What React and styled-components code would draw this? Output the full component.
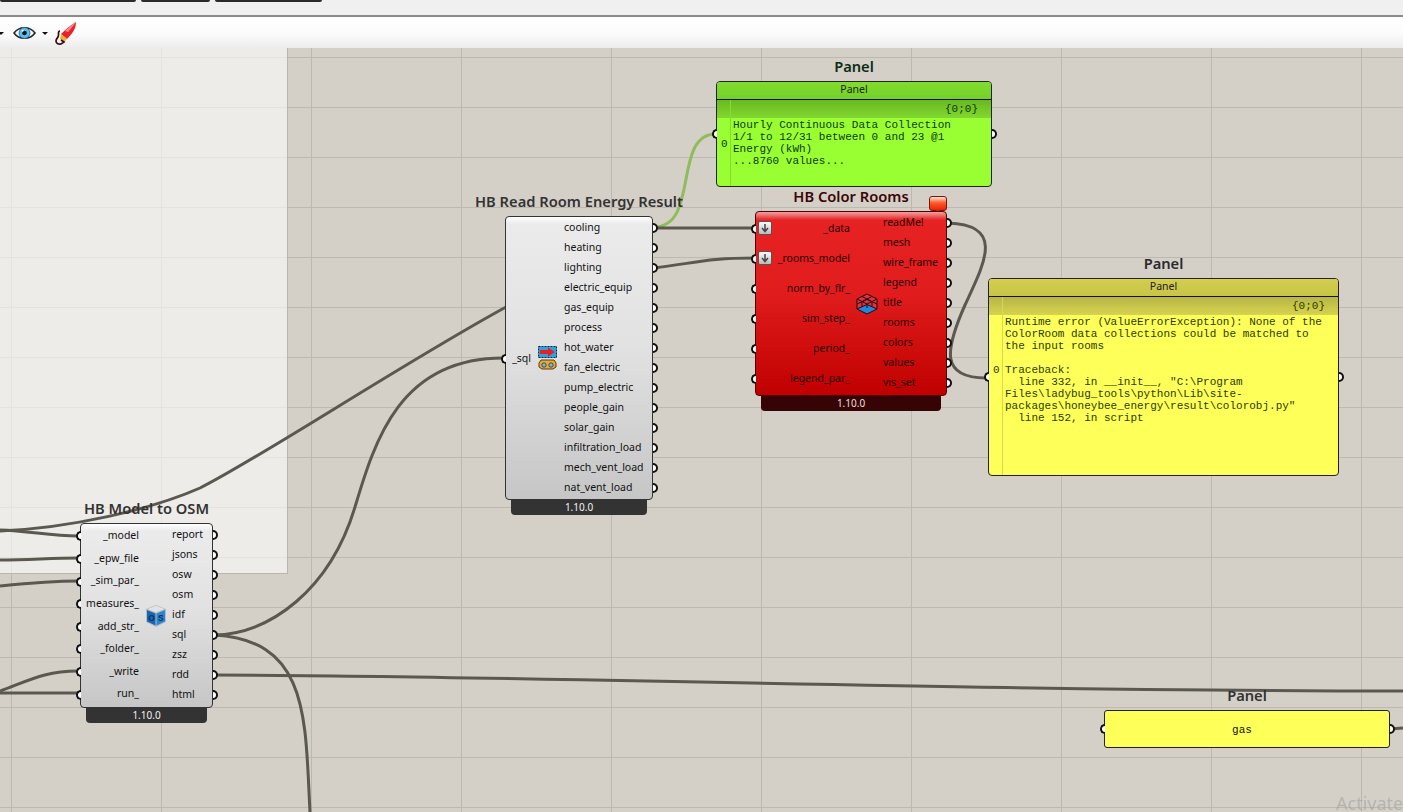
import React from "react";
import styled, { createGlobalStyle } from "styled-components";

const GlobalStyle = createGlobalStyle`
  html, body {
    margin: 0;
    padding: 0;
    height: 100%;
    overflow: hidden;
    background: #d4d0c8;
  }
  #root {
    height: 100%;
  }
`;

const Page = styled.div`
  width: 1403px;
  height: 812px;
  display: flex;
  flex-direction: column;
  overflow: hidden;
  font-family: "Noto Sans", "Open Sans", sans-serif;
`;

const TabStrip = styled.div`
  height: 15px;
  flex: none;
  display: flex;
  gap: 5px;
  align-items: flex-start;
  background: #f0f0f0;
  border-bottom: 2px solid #8a8a8a;
`;

const Tab = styled.div`
  width: ${(p) => p.$w}px;
  height: 2px;
  background: #2b2b2b;
  border-radius: 0 0 3px 3px;
`;

const Toolbar = styled.div`
  height: 31px;
  flex: none;
  display: flex;
  align-items: center;
  background: linear-gradient(#ffffff, #fbfbfb 55%, #ececec);
`;

const Caret = styled.span`
  width: 0;
  height: 0;
  margin-left: ${(p) => p.$ml}px;
  margin-top: 1px;
  border-left: 3px solid transparent;
  border-right: 3px solid transparent;
  border-top: 3px solid #111;
`;

const Canvas = styled.div`
  position: relative;
  flex: 1;
  overflow: hidden;
  background-color: #d4d0c8;
  background-image:
    linear-gradient(90deg, #bdb9b2 1px, transparent 1px),
    linear-gradient(#bdb9b2 1px, transparent 1px);
  background-size: 150px 50px;
  background-position: 11px 0, 0 9px;
`;

const Group = styled.div`
  position: absolute;
  left: 0;
  top: 0;
  width: 287px;
  height: 525px;
  background: rgba(255, 255, 255, 0.6);
  border-right: 1px solid #b9b6ae;
  border-bottom: 1px solid #b9b6ae;
`;

const Wires = styled.svg`
  position: absolute;
  left: 0;
  top: 0;
  width: 1403px;
  height: 764px;
`;

const NodeWrap = styled.div`
  position: absolute;
  left: ${(p) => p.$x}px;
  top: ${(p) => p.$y - 48}px;
  width: ${(p) => p.$w}px;
`;

const NodeLabel = styled.div`
  position: absolute;
  left: -60px;
  right: -60px;
  bottom: 100%;
  margin-bottom: 5px;
  text-align: center;
  font-size: 14.7px;
  line-height: 20px;
  font-weight: 600;
  white-space: nowrap;
  color: ${(p) => p.$color || "#333"};
`;

const NodeBody = styled.div`
  box-sizing: border-box;
  position: relative;
  display: grid;
  grid-template-columns: ${(p) => p.$inW}px ${(p) => p.$iconW}px 1fr;
  height: ${(p) => p.$h}px;
  border: 1px solid ${(p) => (p.$red ? "#4a0505" : "#333")};
  border-radius: 4px;
  color: ${(p) => (p.$red ? "#2a0000" : "#111")};
  background: ${(p) =>
    p.$red
      ? "linear-gradient(#f4a0a0, #e62222 8px, #e01c1c 45%, #c00000)"
      : "linear-gradient(#ffffff, #ebebeb 7px, #e2e2e2 45%, #c6c6c6)"};
  font-size: 10.5px;
`;

const Footer = styled.div`
  margin: 0 6px;
  height: 15px;
  line-height: 14px;
  text-align: center;
  font-size: 10px;
  border-radius: 0 0 4px 4px;
  color: ${(p) => (p.$red ? "#f2dede" : "#f2f2f2")};
  background: ${(p) => (p.$red ? "#360404" : "#333")};
`;

const InputCol = styled.div`
  display: flex;
  flex-direction: column;
  justify-content: center;
  align-items: stretch;
  padding-bottom: ${(p) => p.$pb}px;
`;

const OutputCol = styled.div`
  display: flex;
  flex-direction: column;
`;

const IconCell = styled.div`
  display: flex;
  align-items: center;
  justify-content: center;
`;

const Row = styled.div`
  position: relative;
  height: ${(p) => p.$h}px;
  line-height: ${(p) => p.$h}px;
  white-space: nowrap;
  text-align: ${(p) => (p.$right ? "right" : "left")};
`;

const Grip = styled.span`
  box-sizing: border-box;
  position: absolute;
  top: 50%;
  width: 5px;
  height: 10px;
  margin-top: ${(p) => p.$mt ?? -4}px;
  background: #fff;
  border: 2px solid #111;
  ${(p) =>
    p.$side === "left"
      ? "left: -5px; border-right: none; border-radius: 5px 0 0 5px;"
      : "right: -6px; border-left: none; border-radius: 0 5px 5px 0;"}
`;

const ArrowBadge = styled.span`
  box-sizing: border-box;
  position: absolute;
  left: 2px;
  top: 50%;
  width: 14px;
  height: 14px;
  margin-top: -7px;
  display: flex;
  align-items: center;
  justify-content: center;
  background: linear-gradient(#fafafa, #bbb);
  border: 1px solid #555;
  border-radius: 2px;
`;

const Balloon = styled.div`
  box-sizing: border-box;
  position: absolute;
  right: 0;
  top: -15px;
  width: 18px;
  height: 15px;
  background: linear-gradient(#ffe6d8, #ff5a2a 45%, #e82208);
  border: 1px solid #7a1508;
  border-radius: 3px;
  &::after {
    content: "";
    position: absolute;
    left: 5px;
    top: 12px;
    border-left: 3px solid transparent;
    border-right: 3px solid transparent;
    border-top: 3px solid #e82208;
  }
`;

const PanelBox = styled.div`
  box-sizing: border-box;
  position: relative;
  height: ${(p) => p.$h}px;
  display: flex;
  flex-direction: column;
  border: 1px solid #222;
  border-radius: 4px;
  color: ${(p) => p.$ink};
  background: ${(p) => p.$base};
`;

const PanelTitle = styled.div`
  flex: none;
  height: 17px;
  line-height: 15px;
  text-align: center;
  font-size: 10.5px;
  color: #222;
  border-bottom: 1px solid #111;
  border-radius: 3px 3px 0 0;
  background: ${(p) => p.$bar};
`;

const PanelInner = styled.div`
  flex: 1;
  display: grid;
  grid-template-columns: 14px 1fr;
  min-height: 0;
  border-radius: 0 0 3px 3px;
  background: linear-gradient(${(p) => p.$strip}) top / 100% 18px no-repeat;
`;

const Gutter = styled.div`
  border-right: 1px solid ${(p) => p.$line};
  padding-top: ${(p) => p.$zeroTop}px;
  padding-left: 4px;
  font-family: "Liberation Mono", monospace;
  font-size: 11px;
  line-height: 12px;
`;

const PanelContent = styled.div`
  font-family: "Liberation Mono", monospace;
  font-size: 11px;
  line-height: 12px;
  padding: 0 6px 0 2px;
  white-space: pre;
`;

const IndexTag = styled.div`
  height: 19px;
  line-height: 19px;
  text-align: right;
  padding-right: 7px;
`;

const GasBox = styled.div`
  box-sizing: border-box;
  position: relative;
  height: 38px;
  display: flex;
  align-items: center;
  justify-content: center;
  padding: 1px 10px 0 0;
  font-family: "Liberation Mono", monospace;
  font-size: 11px;
  color: #111;
  background: #ffff59;
  border: 1px solid #222;
  border-radius: 3px;
`;

const Watermark = styled.div`
  position: absolute;
  left: 1336px;
  top: 743px;
  font-family: "Noto Sans", sans-serif;
  font-size: 18px;
  line-height: 24px;
  white-space: nowrap;
  color: rgba(160, 160, 158, 0.6);
`;

const EyeIcon = () => (
  <svg width="23" height="18" viewBox="0 0 23 18" style={{ marginLeft: 9, flex: "none" }}>
    <path d="M1 9 C6 2 17 2 22 9 C17 16 6 16 1 9 Z" fill="#f2f6f8" stroke="#1f2a33" strokeWidth="1.6" />
    <circle cx="11.5" cy="9" r="5.4" fill="#5cc0ee" stroke="#2b5f85" strokeWidth="0.8" />
    <circle cx="11.5" cy="9" r="2.3" fill="#06121c" />
    <circle cx="9.6" cy="6.8" r="1" fill="#fff" />
  </svg>
);

const BrushIcon = () => (
  <svg width="23" height="24" viewBox="0 0 23 24" style={{ marginLeft: 6, flex: "none" }}>
    <path d="M22 1 C22 8 18 13 13 18 L7 13 C12 8 17 4 22 1 Z" fill="#e8222a" />
    <path d="M22 1 C20 4 17 8 14 11 L11 10 C14 7 18 4 22 1 Z" fill="#f58a8a" />
    <path d="M7 13 L13 18 L10 21 L6 18 Z" fill="#e9b13a" />
    <path d="M7 19 L10 21 L7 23 C4 23.500 2 22 2 20 C2 17 5 17 4.500 13 C4.300 11 5 10 6 10" fill="none" stroke="#3a0c0c" strokeWidth="1.7" />
  </svg>
);

const SqlIcon = () => (
  <svg width="19" height="24" viewBox="0 0 19 24">
    <rect x="0.500" y="0.500" width="18" height="11" fill="#22a8e0" stroke="#10213a" strokeDasharray="2 1" />
    <path d="M2 4 H10 V1.500 L17 6 L10 10.500 V8 H2 Z" fill="#ee1c25" />
    <path d="M3 14 H16 L18 17 V21 L15 23 H4 L1 21 V17 Z" fill="#f0a830" stroke="#5a3a10" />
    <circle cx="6" cy="19" r="2.200" fill="#5cc0ee" stroke="#222" strokeWidth="0.7" />
    <circle cx="13" cy="19" r="2.200" fill="#5cc0ee" stroke="#222" strokeWidth="0.7" />
  </svg>
);

const CubeIcon = () => (
  <svg width="22" height="22" viewBox="0 0 22 22">
    <path d="M1 6 L11 1 L21 6 V16 L11 21 L1 16 Z" fill="#e8303c" />
    <path d="M1 16 L11 11.500 L21 16 L11 21 Z" fill="#1f88d8" />
    <path
      d="M1 6 L11 1 L21 6 V16 L11 21 L1 16 Z M1 6 L11 11 L21 6 M1 16 L11 11.500 L21 16 M6 3.500 L16 8.500 M16 3.500 L6 8.500 M1 11 L11 6.500 L21 11 M11 11 V15 M6 8.500 V13.500 M16 8.500 V13.500"
      fill="none"
      stroke="#1a0a10"
      strokeWidth="1"
    />
  </svg>
);

const OsIcon = () => (
  <svg width="22" height="24" viewBox="0 0 22 24">
    <path d="M11 1 L21 5 V18 L11 23 L1 18 V5 Z" fill="#b9bcc0" />
    <path d="M2 6 L10.500 9.500 V21.500 L2 17.500 Z" fill="#1668b4" />
    <path d="M20 6 L11.500 9.500 V21.500 L20 17.500 Z" fill="#2a86cf" />
    <path d="M2.500 5 L11 1.800 L19.500 5 L11 8.500 Z" fill="#dfe3e6" />
    <text x="3.300" y="17" fontFamily="Liberation Sans, sans-serif" fontSize="8.500" fontWeight="700" fill="#0b2f55">O</text>
    <text x="13" y="17" fontFamily="Liberation Sans, sans-serif" fontSize="8.500" fontWeight="700" fill="#0b2f55">S</text>
  </svg>
);

const DownArrow = () => (
  <svg width="10" height="10" viewBox="0 0 10 10">
    <path d="M5 1 V8 M2 5 L5 8.500 L8 5" fill="none" stroke="#444" strokeWidth="1.500" />
  </svg>
);

const wires = [
  "M0 530 C30 531 50 536 78 536",
  "M0 560 C30 560 50 558 78 558",
  "M0 586 C30 583 50 581 78 581",
  "M0 691 C30 680 45 671 78 671",
  "M0 693 L78 693",
  "M0 531 C70 528 150 510 200 488 C260 458 400 365 506 307",
  "M214 635 C270 634 330 590 355 507 C375 440 400 358 503 358",
  "M214 635 C310 640 305 720 310 812",
  "M214 675 C500 675 900 690 1403 691",
  "M654 228 L755 228",
  "M654 268 C700 262 710 258 755 258",
  "M948 223 C1005 225 985 262 965 305 C945 350 940 378 986 378",
  "M1390 729 L1403 728",
];

const roomOutputs = [
  "cooling", "heating", "lighting", "electric_equip", "gas_equip", "process", "hot_water",
  "fan_electric", "pump_electric", "people_gain", "solar_gain", "infiltration_load",
  "mech_vent_load", "nat_vent_load",
];
const colorInputs = ["_data", "_rooms_model", "norm_by_flr_", "sim_step_", "period_", "legend_par_"];
const colorOutputs = ["readMe!", "mesh", "wire_frame", "legend", "title", "rooms", "colors", "values", "vis_set"];
const osmInputs = ["_model", "_epw_file", "_sim_par_", "measures_", "add_str_", "_folder_", "_write", "run_"];
const osmOutputs = ["report", "jsons", "osw", "osm", "idf", "sql", "zsz", "rdd", "html"];

function Node({ x, y, w, h, title, labelColor, red, inW, iconW, inputs, inH, inPad = 0, outputs, icon, arrows = 0, balloon }) {
  return (
    <NodeWrap $x={x} $y={y} $w={w}>
      <NodeLabel $color={labelColor}>{title}</NodeLabel>
      {balloon && <Balloon />}
      <NodeBody $h={h} $inW={inW} $iconW={iconW} $red={red}>
        <InputCol $pb={inPad}>
          {inputs.map((name, i) => (
            <Row key={name} $h={inH} $right>
              <Grip $side="left" />
              {i < arrows && (
                <ArrowBadge>
                  <DownArrow />
                </ArrowBadge>
              )}
              {name}
            </Row>
          ))}
        </InputCol>
        <IconCell>{icon}</IconCell>
        <OutputCol>
          {outputs.map((name) => (
            <Row key={name} $h={20}>
              {name}
              <Grip $side="right" />
            </Row>
          ))}
        </OutputCol>
      </NodeBody>
      <Footer $red={red}>1.10.0</Footer>
    </NodeWrap>
  );
}

function Panel({ x, y, w, h, labelColor, bar, strip, base, line, ink, zeroTop, text }) {
  return (
    <NodeWrap $x={x} $y={y} $w={w}>
      <NodeLabel $color={labelColor}>Panel</NodeLabel>
      <PanelBox $h={h} $base={base} $ink={ink}>
        <PanelTitle $bar={bar}>Panel</PanelTitle>
        <PanelInner $strip={strip}>
          <Gutter $line={line} $zeroTop={zeroTop}>0</Gutter>
          <PanelContent>
            <IndexTag>{"{0;0}"}</IndexTag>
            {text}
          </PanelContent>
        </PanelInner>
        <Grip $side="left" $mt={-5} />
        <Grip $side="right" $mt={-5} />
      </PanelBox>
    </NodeWrap>
  );
}

export default function App() {
  return (
    <Page>
      <GlobalStyle />
      <TabStrip>
        <Tab $w={136} />
        <Tab $w={69} />
        <Tab $w={107} />
      </TabStrip>
      <Toolbar>
        <Caret $ml={-2} />
        <EyeIcon />
        <Caret $ml={6} />
        <BrushIcon />
      </Toolbar>
      <Canvas>
        <Group />
        <Wires viewBox="0 48 1403 764">
          <path d="M654 227 C700 227 672 134 716 134" fill="none" stroke="#8ebd5a" strokeWidth="3" />
          {wires.map((d) => (
            <path key={d} d={d} fill="none" stroke="#5b5850" strokeWidth="3" />
          ))}
        </Wires>

        <Panel
          x={716}
          y={81}
          w={276}
          h={106}
          labelColor="#0c2e14"
          bar="linear-gradient(#82dc30, #74d028)"
          strip="#68b822, #82d82f"
          base="#99ff33"
          line="#84dc2c"
          ink="#0d3a00"
          zeroTop={38}
          text={"Hourly Continuous Data Collection\n1/1 to 12/31 between 0 and 23 @1\nEnergy (kWh)\n...8760 values..."}
        />
        <Panel
          x={988}
          y={278}
          w={351}
          h={198}
          labelColor="#2b2b2b"
          bar="linear-gradient(#d2ce4e, #c8c448)"
          strip="#b8b544, #d6d350"
          base="#ffff59"
          line="#d8d84c"
          ink="#2a3c00"
          zeroTop={67}
          text={
            "Runtime error (ValueErrorException): None of the\nColorRoom data collections could be matched to\nthe input rooms\n\nTraceback:\n  line 332, in __init__, \"C:\\Program\nFiles\\ladybug_tools\\python\\Lib\\site-\npackages\\honeybee_energy\\result\\colorobj.py\"\n  line 152, in script"
          }
        />
        <NodeWrap $x={1104} $y={710} $w={286}>
          <NodeLabel>Panel</NodeLabel>
          <GasBox>
            gas
            <Grip $side="left" $mt={-5} />
            <Grip $side="right" $mt={-5} />
          </GasBox>
        </NodeWrap>

        <Node
          x={505}
          y={216}
          w={148}
          h={284}
          title="HB Read Room Energy Result"
          inW={25}
          iconW={33}
          inputs={["_sql"]}
          inH={20}
          outputs={roomOutputs}
          icon={<SqlIcon />}
        />
        <Node
          x={755}
          y={211}
          w={192}
          h={185}
          title="HB Color Rooms"
          labelColor="#3a0505"
          red
          inW={94}
          iconW={33}
          inputs={colorInputs}
          inH={30}
          inPad={2}
          outputs={colorOutputs}
          icon={<CubeIcon />}
          arrows={2}
          balloon
        />
        <Node
          x={80}
          y={523}
          w={133}
          h={185}
          title="HB Model to OSM"
          inW={58}
          iconW={33}
          inputs={osmInputs}
          inH={22.6}
          inPad={2}
          outputs={osmOutputs}
          icon={<OsIcon />}
        />
        <Watermark>Activate</Watermark>
      </Canvas>
    </Page>
  );
}
